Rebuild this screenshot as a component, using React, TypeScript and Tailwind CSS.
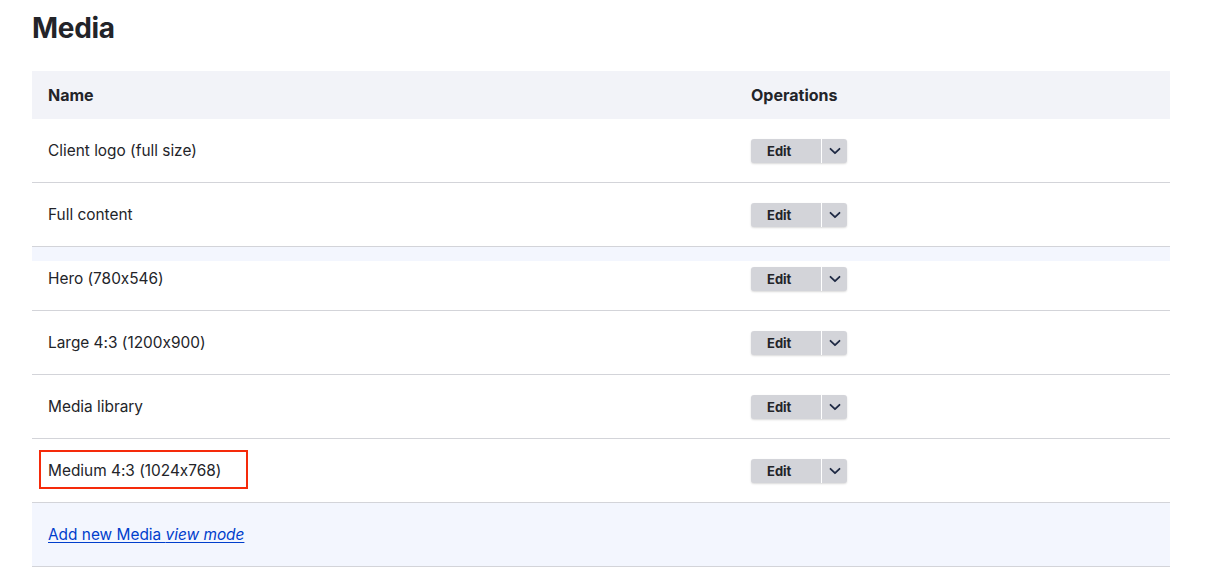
import React from 'react';

const rows = [
  'Client logo (full size)',
  'Full content',
  'Hero (780x546)',
  'Large 4:3 (1200x900)',
  'Media library',
  'Medium 4:3 (1024x768)',
];

function Chevron() {
  return (
    <svg width="12" height="8" viewBox="0 0 12 8" fill="none">
      <path d="M1.5 1.8 6 6.2 10.5 1.8" stroke="#1f2a44" strokeWidth="1.8" strokeLinecap="round" strokeLinejoin="round" />
    </svg>
  );
}

function OpsButton() {
  return (
    <div className="flex h-6 w-[96px] rounded-[3px] bg-[#d3d4d9] shadow-[0_1px_2px_rgba(0,0,0,0.15)] overflow-hidden">
      <button className="w-[70px] pl-4 text-left text-[13px] font-bold text-[#232429] leading-6">Edit</button>
      <div className="w-px bg-white" />
      <button className="flex-1 flex items-center justify-center">
        <Chevron />
      </button>
    </div>
  );
}

export default function App() {
  return (
    <div
      className="min-h-[567px] bg-white px-8 pt-[9px] text-[#232429] [font-feature-settings:'calt'_0]"
      style={{ fontFamily: 'Inter, "Liberation Sans", sans-serif' }}
    >
      <h1 className="text-[28px] font-bold leading-[38px] tracking-[-0.3px] mb-6">Media</h1>
      <div className="w-[1138px]">
        <div className="flex h-12 items-center bg-[#f2f3f8] text-[16px] font-bold">
          <div className="w-[703px] pl-4">Name</div>
          <div className="pl-4">Operations</div>
        </div>
        {rows.map((name, i) => (
          <div
            key={name}
            className={
              'flex h-16 items-center border-b border-[#d3d4d9] text-[15.4px] ' +
              (i === 2 ? 'bg-[linear-gradient(to_bottom,#f3f6fe_14px,#ffffff_14px)]' : 'bg-white')
            }
          >
            <div className="w-[703px] pl-4">
              {i === 5 ? (
                <span className="relative">
                  {name}
                  <span className="absolute left-[-9px] right-[-27px] top-[-11px] bottom-[-9px] border-2 border-[#f52a0a]" />
                </span>
              ) : (
                name
              )}
            </div>
            <div className="pl-4">
              <OpsButton />
            </div>
          </div>
        ))}
        <div className="flex h-16 items-center bg-[#f3f6fe] border-b border-[#d3d4d9] pl-4 text-[15.4px]">
          <a href="#" className="text-[#003ecc] underline underline-offset-2">
            Add new Media <em>view mode</em>
          </a>
        </div>
      </div>
    </div>
  );
}
